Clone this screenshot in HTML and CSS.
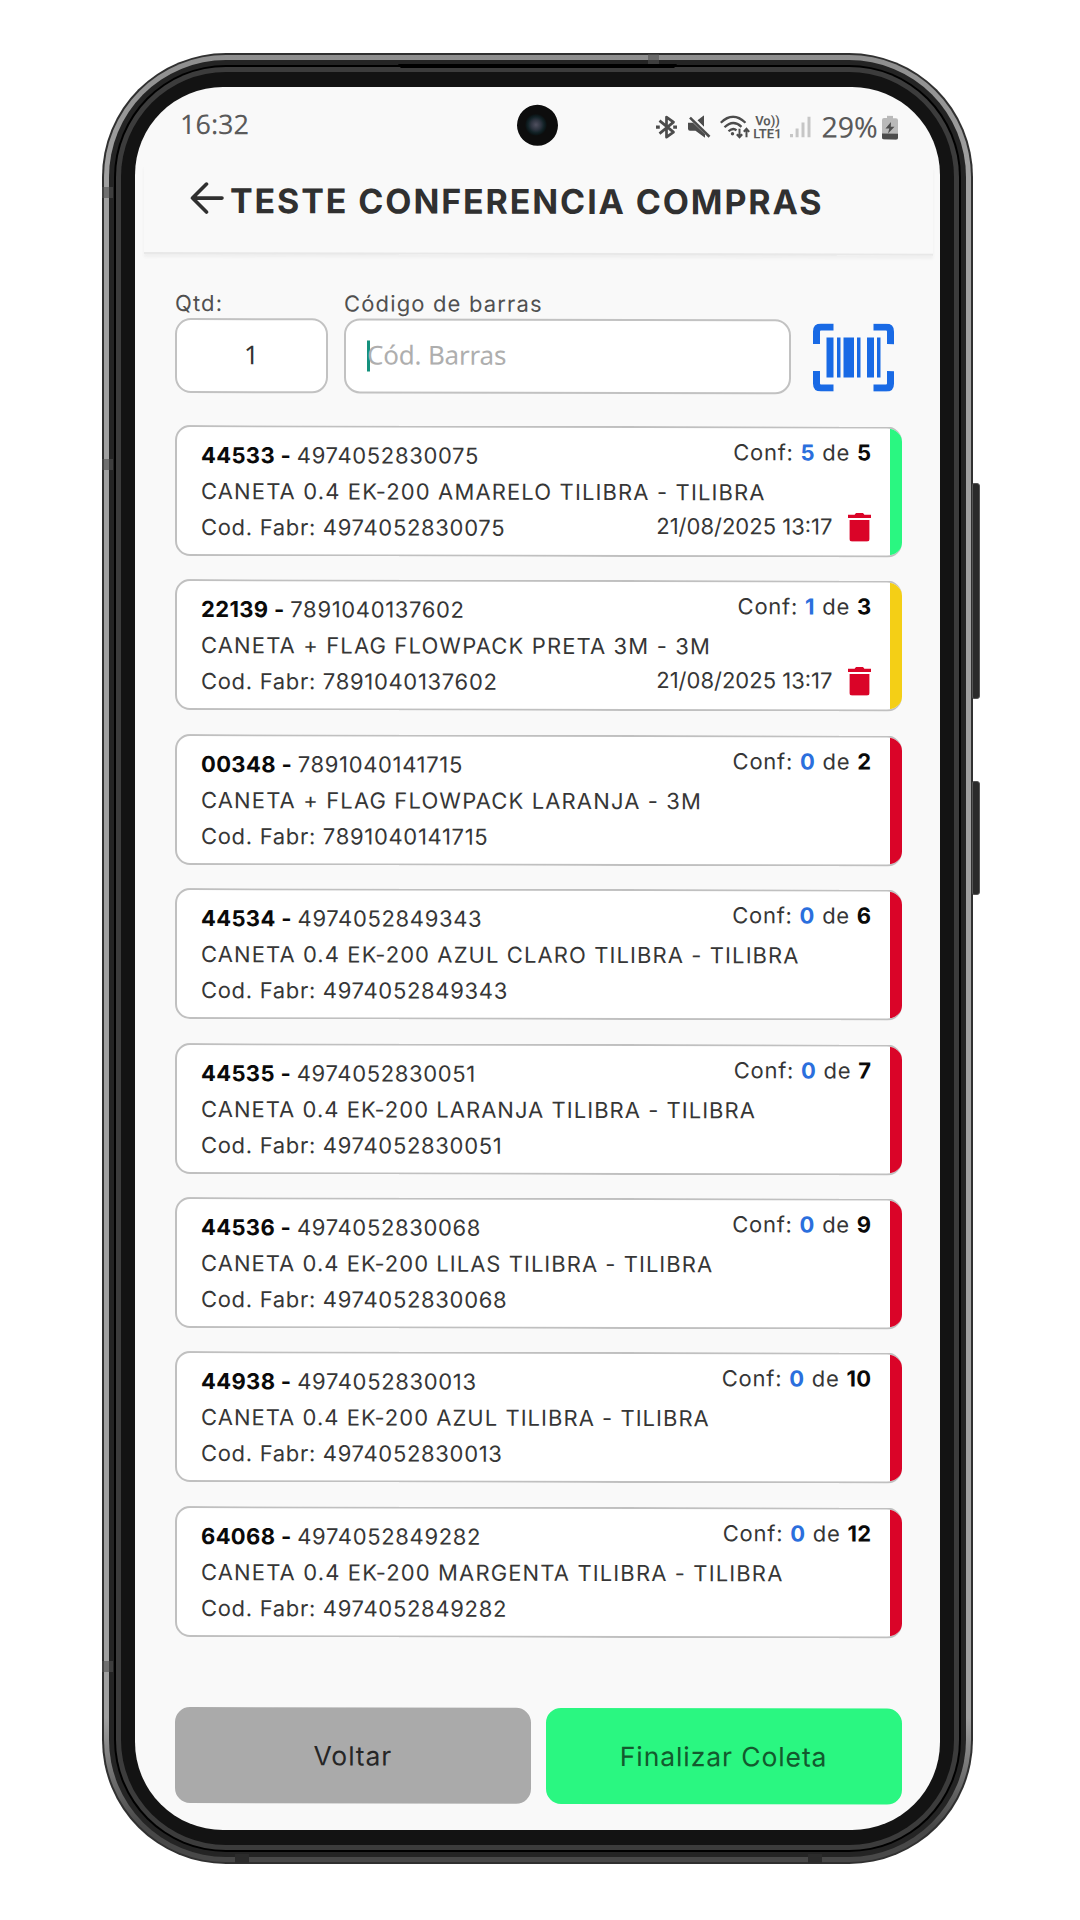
FILE: index.html
```html
<!DOCTYPE html>
<html lang="pt-BR">
<head>
<meta charset="utf-8">
<title>Teste Conferencia Compras</title>
<link rel="stylesheet" href="styles.css">
</head>
<body>
<svg width="0" height="0" class="defs">
  <symbol id="trash" viewBox="0 0 23 29"><path fill="#da0428" d="M0 2.200h6.600L8 .4h7l1.400 1.800H23v3.300H0zM1.600 7.400h19.800v19a2.700 2.700 0 0 1-2.700 2.700H4.300a2.700 2.700 0 0 1-2.700-2.700z"/></symbol>
</svg>
<div class="phone">
  <div class="key volume"></div>
  <div class="key power"></div>
  <div class="rim"><div class="metal"><div class="dark"><div class="groove"><div class="lip"><div class="bezel">
    <main class="screen">
      <div class="content">
        <div class="status">
          <span class="time">16:32</span>
          <svg class="bt" width="21" height="24" viewBox="0 0 21 24" fill="none" stroke="#4c4c4c" stroke-width="2.700"><path d="M3.500 5.500 17.500 17 10.500 22V2L17.500 7 3.500 18.500" stroke-linejoin="round"/><path d="M0 12h3.800M17.200 12H21" stroke-width="3.400"/></svg>
          <svg class="mute" width="23" height="23" viewBox="0 0 23 23"><path fill="#4c4c4c" d="M0 7.500h5l12 11.500v3.500L7.500 15.500H2Q0 15.500 0 13.500zM9.500 5 16 0v11.500z"/><path d="M2 2.500 21.500 21.500" stroke="#4c4c4c" stroke-width="2.600"/></svg>
          <svg class="wifi" width="30" height="24" viewBox="0 0 30 24" fill="none" stroke="#4c4c4c" stroke-width="2.300"><path d="M.8 7.500Q13 -4.500 25.500 7.500M4.500 12Q13 3.600 21.500 11.500M8.500 16Q13 12 16.500 15"/><circle cx="12.500" cy="18.500" r="1.700" fill="#4c4c4c" stroke="none"/><path stroke-width="2" d="M19.500 13.500v8M16.800 19l2.700 3 2.700-3M26.500 22v-8M23.800 16.500l2.700-3 2.700 3"/></svg>
          <span class="volte"><span>Vo))</span><span>LTE1</span></span>
          <svg class="signal" width="21" height="21" viewBox="0 0 21 21" fill="#c6c6c6"><path d="M0 17.500h3V21H0zM5.600 12h3v9h-3zM11.500 6h3v15h-3zM17.500 0h3v21h-3z"/></svg>
          <span class="pct">29%</span>
          <svg class="battery" width="16" height="24" viewBox="0 0 16 24"><path fill="#b9b9b9" d="M5 0h6v2.500h3q2 0 2 2V22q0 2-2 2H2q-2 0-2-2V4.500q0-2 2-2h3z"/><path fill="#4c4c4c" d="M0 18h16v4q0 2-2 2H2q-2 0-2-2zM9 6.500 3.500 13h3.800L6 18l6.500-6.800H8.800z"/></svg>
        </div>
        <div class="camera"></div>
        <header class="header">
          <svg width="34" height="32" viewBox="0 0 34 32" fill="none" stroke="#303030" stroke-width="3.600" stroke-linecap="round" stroke-linejoin="round"><path d="M32 16H2.500M16.500 2 2.500 16l14 14"/></svg>
          <h1>TESTE CONFERENCIA COMPRAS</h1>
        </header>
        <form class="entry">
          <label class="qty">Qtd:<span class="field">1</span></label>
          <label class="code">Código de barras<span class="field hint">Cód. Barras</span></label>
          <svg class="scan" width="81" height="68" viewBox="0 0 81 68"><path fill="none" stroke="#196ae5" stroke-width="7" d="M20.500 3.500H8Q3.500 3.500 3.500 8v12.500M60.500 3.500H73q4.500 0 4.500 4.500v12.500M77.500 47.500V60q0 4.500-4.500 4.500H60.500M20.500 64.500H8q-4.500 0-4.500-4.500V47.500"/><path fill="#196ae5" d="M13.500 14h7v40h-7zM24 14h3.500v40H24zM30.500 14H41v40H30.500zM44 14h3.500v40H44zM54 14h7v40h-7zM64 14h3.500v40H64z"/></svg>
        </form>
        <section class="list">
          <article class="card done"><div class="row"><span><b>44533 -</b> <i>4974052830075</i></span><span class="conf">Conf: <em>5</em> de <b>5</b></span></div><div class="name">CANETA 0.4 EK-200 AMARELO TILIBRA - TILIBRA</div><div class="row"><span class="fabr">Cod. Fabr: 4974052830075</span><span class="date">21/08/2025 13:17<svg width="23" height="29"><use href="#trash"/></svg></span></div></article>
          <article class="card partial"><div class="row"><span><b>22139 -</b> <i>7891040137602</i></span><span class="conf">Conf: <em>1</em> de <b>3</b></span></div><div class="name">CANETA + FLAG FLOWPACK PRETA 3M - 3M</div><div class="row"><span class="fabr">Cod. Fabr: 7891040137602</span><span class="date">21/08/2025 13:17<svg width="23" height="29"><use href="#trash"/></svg></span></div></article>
          <article class="card"><div class="row"><span><b>00348 -</b> <i>7891040141715</i></span><span class="conf">Conf: <em>0</em> de <b>2</b></span></div><div class="name">CANETA + FLAG FLOWPACK LARANJA - 3M</div><div class="row"><span class="fabr">Cod. Fabr: 7891040141715</span></div></article>
          <article class="card"><div class="row"><span><b>44534 -</b> <i>4974052849343</i></span><span class="conf">Conf: <em>0</em> de <b>6</b></span></div><div class="name">CANETA 0.4 EK-200 AZUL CLARO TILIBRA - TILIBRA</div><div class="row"><span class="fabr">Cod. Fabr: 4974052849343</span></div></article>
          <article class="card"><div class="row"><span><b>44535 -</b> <i>4974052830051</i></span><span class="conf">Conf: <em>0</em> de <b>7</b></span></div><div class="name">CANETA 0.4 EK-200 LARANJA TILIBRA - TILIBRA</div><div class="row"><span class="fabr">Cod. Fabr: 4974052830051</span></div></article>
          <article class="card"><div class="row"><span><b>44536 -</b> <i>4974052830068</i></span><span class="conf">Conf: <em>0</em> de <b>9</b></span></div><div class="name">CANETA 0.4 EK-200 LILAS TILIBRA - TILIBRA</div><div class="row"><span class="fabr">Cod. Fabr: 4974052830068</span></div></article>
          <article class="card"><div class="row"><span><b>44938 -</b> <i>4974052830013</i></span><span class="conf">Conf: <em>0</em> de <b>10</b></span></div><div class="name">CANETA 0.4 EK-200 AZUL TILIBRA - TILIBRA</div><div class="row"><span class="fabr">Cod. Fabr: 4974052830013</span></div></article>
          <article class="card"><div class="row"><span><b>64068 -</b> <i>4974052849282</i></span><span class="conf">Conf: <em>0</em> de <b>12</b></span></div><div class="name">CANETA 0.4 EK-200 MARGENTA TILIBRA - TILIBRA</div><div class="row"><span class="fabr">Cod. Fabr: 4974052849282</span></div></article>
        </section>
        <footer class="actions">
          <button class="back" type="button">Voltar</button>
          <button class="finish" type="button">Finalizar Coleta</button>
        </footer>
      </div>
    </main>
  </div></div></div></div></div></div>
  <div class="slit"></div>
  <div class="band b1"></div><div class="band b2"></div><div class="band b3"></div>
  <div class="band b4"></div><div class="band b5"></div><div class="band b6"></div>
</div>
</body>
</html>
```
FILE: styles.css
```css
* { box-sizing: border-box; }
body { margin: 0; height: 1920px; background: #fff; font-family: Inter, sans-serif; color: #363636; overflow: hidden; }
.defs { display: block; }

/* Device frame: nested rings from the outer rim to the glass */
.phone { position: relative; width: 871px; height: 1811px; margin: 53px 0 0 102px; }
.rim, .metal, .dark, .groove, .lip, .bezel { height: 100%; }
.rim { padding: 2px; border-radius: 124px; background: #303030; }
.metal { padding: 5px; border-radius: 122px; background: linear-gradient(#8e8e8e 0, #a0a0a0 6%, #a0a0a0 92%, #484848 98%, #484848 100%); }
.dark { padding: 5px; border-radius: 117px; background: #242424; }
.groove { padding: 2px; border-radius: 112px; background: #000; }
.lip { padding: 5px; border-radius: 110px; background: #3c3c3c; }
.bezel { padding: 15px 14px; border-radius: 105px; background: #131313; }
.screen { height: 100%; border-radius: 88px; background: #f9f9f9; overflow: hidden; }
.key { position: absolute; left: 870px; width: 8px; border-radius: 2px 3px 3px 2px; background: #2a2a2a; border: 1px solid #555; }
.volume { top: 430px; height: 216px; }
.power { top: 728px; height: 114px; }
.slit { position: absolute; left: 296px; top: 11px; width: 279px; height: 4px; background: #000; clip-path: polygon(0 0, 100% 0, 99% 100%, 1% 100%); }
.band { position: absolute; background: rgba(80, 80, 80, .6); }
.b1 { left: 0; top: 134px; width: 11px; height: 11px; }
.b2 { left: 0; top: 406px; width: 11px; height: 11px; }
.b3 { left: 0; top: 1608px; width: 11px; height: 11px; }
.b4 { left: 546px; top: 1px; width: 11px; height: 10px; }
.b5 { left: 133px; top: 1801px; width: 14px; height: 9px; background: #2b2b2b; }
.b6 { left: 706px; top: 1801px; width: 14px; height: 9px; background: #2b2b2b; }

.content { display: flex; flex-direction: column; height: 100%; padding: 0 38.500px 0 40px; transform: skewY(.13deg); transform-origin: 40px 0; }

/* Status bar */
.status { display: flex; align-items: center; height: 78px; padding-left: 5px; padding-right: 4px; font: 27px "Noto Sans", sans-serif; color: #5a5a5a; }
.time { margin-right: auto; margin-top: -5px; }
.bt, .mute, .wifi, .signal, .battery { margin-top: -1px; flex: none; }
.mute { margin-left: 11px; }
.wifi { margin-left: 9px; }
.volte { display: flex; flex-direction: column; width: 30px; margin-left: 3px; font: 600 13px Roboto, sans-serif; line-height: 13px; align-items: center; white-space: nowrap; }
.volte span { height: 13px; }
.signal { margin-left: 7px; }
.pct { width: 57px; margin-left: 11px; margin-top: -3px; font-size: 28.500px; }
.battery { margin-left: 3px; }
.camera { position: absolute; left: 382px; top: 17px; width: 41px; height: 41px; border-radius: 50%; background: radial-gradient(circle at 19px 20px, #50505f 0, #2e3440 5px, #122226 8px, #0c1517 10px, #0d0d0d 11px); }

/* Title bar */
.header { display: flex; align-items: center; gap: 6px; height: 89px; margin: 0 -31px; padding: 0 0 17px 46px; border-bottom: 2px solid #e8e8e8; box-shadow: 0 3px 3px #efefef; }
.header svg { margin-top: -4px; }
h1 { margin: 1px 0 0; font-size: 34px; line-height: 40px; font-weight: 700; letter-spacing: 1.880px; white-space: nowrap; color: #303030; }

/* Entry form */
.entry { display: flex; gap: 16px; margin-top: 34px; font-size: 22px; line-height: 30px; letter-spacing: 1.150px; color: #505050; }
.entry label { display: flex; flex-direction: column; }
.qty { width: 153px; }
.code { width: 447px; }
.field { display: flex; align-items: center; justify-content: center; height: 75px; padding-bottom: 4px; border: 2px solid #c2c2c2; border-radius: 16px; background: #fff; font: 26px "Noto Sans", sans-serif; letter-spacing: 0; color: #333; }
.hint { justify-content: flex-start; padding-left: 21px; color: #aeaeae; letter-spacing: -.200px; }
.hint::before { content: ""; width: 3px; height: 31px; margin-right: -3px; margin-top: 3px; background: #14917d; }
.scan { margin: 34px 0 0 6px; }

/* Items */
.list { display: flex; flex-direction: column; gap: 23.400px; margin-top: 32px; }
.card { position: relative; height: 131px; padding: 10px 26px 0 24px; border: 2px solid #c0c0c0; border-right: 0; border-radius: 15px; background: #fff; font-size: 22px; line-height: 36px; overflow: hidden; white-space: nowrap; --tone: #da0428; }
.card::after { content: ""; position: absolute; right: 0; top: 0; bottom: 0; width: 12px; background: var(--tone); }
.done { --tone: #2af781; }
.partial { --tone: #f4cf16; }
.row { display: flex; justify-content: space-between; height: 36px; }
.row b { color: #0a0a0a; letter-spacing: .350px; }
.row i { font-style: normal; letter-spacing: .650px; margin-left: -.500px; }
.name { letter-spacing: 1.130px; }
.card:nth-child(5) .name, .card:nth-child(6) .name, .card:nth-child(7) .name { letter-spacing: 1.030px; }
.card:nth-child(4) .name { letter-spacing: 1.090px; }
.fabr { letter-spacing: .680px; }
.conf { margin-top: -4px; margin-right: 4px; letter-spacing: .750px; }
.conf em { font-style: normal; font-weight: 700; color: #2b6fdd; }
.date { display: flex; align-items: center; gap: 15px; margin-top: -2px; margin-right: 5px; height: 36px; }

/* Footer buttons */
.actions { display: grid; grid-template-columns: 1fr 1fr; gap: 15px; margin-top: 70.500px; }
button { height: 96px; border: 0; border-radius: 15px; font: 26.500px Inter, sans-serif; letter-spacing: .900px; color: #262626; }
.back { background: #aaa; }
.finish { background: #2af781; color: #135a2e; }
```
